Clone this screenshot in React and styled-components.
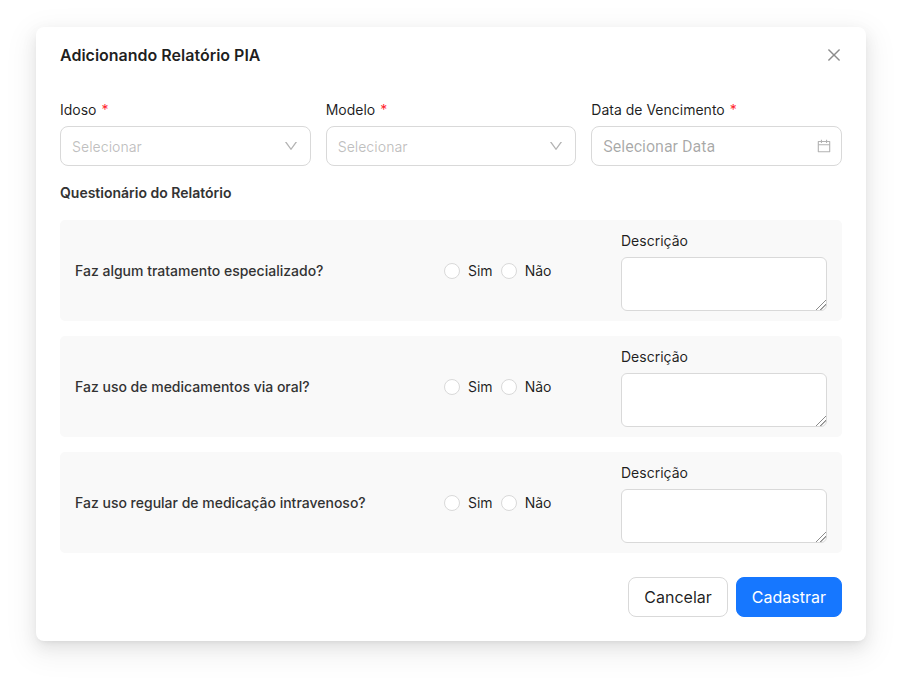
import React, { useId } from "react";
import styled, { createGlobalStyle } from "styled-components";
import { AiOutlineCalendar, AiOutlineClose, AiOutlineDown } from "react-icons/ai";

const GlobalStyle = createGlobalStyle`
  *, *::before, *::after { box-sizing: border-box; }
  body {
    margin: 0;
    background: #fff;
    color: rgba(0, 0, 0, 0.88);
    font-family: Inter, "Liberation Sans", sans-serif;
    font-size: 14px;
    line-height: 22px;
  }
  button, input, select, textarea { font-family: inherit; }
`;

const Page = styled.main`
  padding: 27px 36px 45px;
`;

const Dialog = styled.form`
  padding: 16px 24px 24px;
  background: #fff;
  border-radius: 8px;
  box-shadow:
    0 6px 16px 0 rgba(0, 0, 0, 0.08),
    0 3px 6px -4px rgba(0, 0, 0, 0.12),
    0 9px 28px 8px rgba(0, 0, 0, 0.05);
`;

const Header = styled.header`
  display: flex;
  align-items: center;
  justify-content: space-between;
  margin-bottom: 32px;
`;

const Title = styled.h1`
  margin: 0;
  font-size: 16px;
  font-weight: 600;
  line-height: 24px;
`;

const CloseButton = styled.button`
  display: flex;
  justify-content: center;
  width: 16px;
  padding: 0;
  border: 0;
  background: none;
  color: rgba(0, 0, 0, 0.45);
  font-size: 18px;
  cursor: pointer;

  svg { flex: none; }
`;

const Fields = styled.div`
  display: grid;
  grid-template-columns: repeat(3, minmax(0, 1fr));
  gap: 15px;
`;

const Field = styled.div`
  display: flex;
  flex-direction: column;
  gap: 5px;
`;

const Required = styled.span`
  margin-left: 1px;
  color: #ff1f2f;
`;

const ControlBox = styled.div`
  display: grid;
  grid-template-columns: minmax(0, 1fr) auto;
  align-items: center;
  height: 40px;
  padding-right: ${(p) => (p.$icon === "calendar" ? "9px" : "11px")};
  border: 1px solid #d9d9d9;
  border-radius: 8px;
  background: #fff;
  color: rgba(0, 0, 0, 0.3);

  svg {
    grid-area: 1 / 2;
    font-size: 16px;
    pointer-events: none;
  }
`;

const Select = styled.select`
  grid-area: 1 / 1 / 2 / 3;
  width: 100%;
  height: 38px;
  padding: 0 11px;
  border: 0;
  appearance: none;
  background: transparent;
  color: rgba(0, 0, 0, 0.25);
  font-size: 14px;
`;

const DateInput = styled.input`
  width: 100%;
  height: 38px;
  padding: 0 11px;
  border: 0;
  background: transparent;
  font-size: 16px;

  && { font-family: Roboto, sans-serif; }
  &::placeholder { color: rgba(0, 0, 0, 0.35); }
`;

const SectionTitle = styled.h2`
  margin: 16px 0;
  color: #333;
  font-size: 14px;
  font-weight: 600;
  line-height: 22px;
`;

const Questions = styled.div`
  display: flex;
  flex-direction: column;
  gap: 15px;
`;

const QuestionCard = styled.section`
  display: grid;
  grid-template-columns: 354fr 162fr 206fr;
  align-items: center;
  gap: 15px;
  padding: 10px 15px;
  border-radius: 5px;
  background: #f9f9f9;
`;

const QuestionText = styled.p`
  margin: 0;
  color: #333;
  font-weight: 500;
`;

const Options = styled.div`
  display: flex;
  gap: 8px;
`;

const Option = styled.label`
  display: flex;
  align-items: center;
  gap: 8px;
`;

const Radio = styled.input`
  width: 16px;
  height: 16px;
  margin: 0;
  border: 1px solid #d9d9d9;
  border-radius: 50%;
  appearance: none;
  background: #fff;

  &:checked { border: 5px solid #1677ff; }
`;

const Description = styled.textarea`
  display: block;
  width: 100%;
  height: 54px;
  padding: 4px 11px;
  border: 1px solid #d9d9d9;
  border-radius: 6px;
  background: #fff;
  font-size: 14px;
  line-height: 22px;
  resize: vertical;

  &::-webkit-resizer {
    background: linear-gradient(
      135deg,
      transparent 0 65%,
      #8c8c8c 66% 69%,
      transparent 70% 79%,
      #8c8c8c 80% 83%,
      transparent 84%
    );
  }
`;

const Footer = styled.footer`
  display: flex;
  justify-content: flex-end;
  gap: 8px;
  margin-top: 24px;
`;

const Button = styled.button`
  height: 40px;
  padding: 0 15px;
  border: 1px solid ${(p) => (p.$primary ? "#1677ff" : "#d9d9d9")};
  border-radius: 8px;
  background: ${(p) => (p.$primary ? "#1677ff" : "#fff")};
  color: ${(p) => (p.$primary ? "#fff" : "rgba(0, 0, 0, 0.88)")};
  font-size: 16px;
  line-height: 24px;
  cursor: pointer;
`;

const questions = [
  "Faz algum tratamento especializado?",
  "Faz uso de medicamentos via oral?",
  "Faz uso regular de medicação intravenoso?",
];

function RequiredLabel({ htmlFor, children }) {
  return (
    <label htmlFor={htmlFor}>
      {children} <Required>*</Required>
    </label>
  );
}

function SelectField({ label }) {
  const id = useId();
  return (
    <Field>
      <RequiredLabel htmlFor={id}>{label}</RequiredLabel>
      <ControlBox>
        <Select id={id} defaultValue="">
          <option value="">Selecionar</option>
        </Select>
        <AiOutlineDown aria-hidden="true" />
      </ControlBox>
    </Field>
  );
}

function DateField({ label }) {
  const id = useId();
  return (
    <Field>
      <RequiredLabel htmlFor={id}>{label}</RequiredLabel>
      <ControlBox $icon="calendar">
        <DateInput id={id} type="text" placeholder="Selecionar Data" />
        <AiOutlineCalendar aria-hidden="true" />
      </ControlBox>
    </Field>
  );
}

function Question({ text }) {
  const id = useId();
  return (
    <QuestionCard>
      <QuestionText id={`${id}-text`}>{text}</QuestionText>
      <Options role="radiogroup" aria-labelledby={`${id}-text`}>
        <Option>
          <Radio type="radio" name={id} value="sim" />
          Sim
        </Option>
        <Option>
          <Radio type="radio" name={id} value="nao" />
          Não
        </Option>
      </Options>
      <Field>
        <label htmlFor={`${id}-description`}>Descrição</label>
        <Description id={`${id}-description`} />
      </Field>
    </QuestionCard>
  );
}

export default function App() {
  return (
    <Page>
      <GlobalStyle />
      <Dialog role="dialog" aria-labelledby="dialog-title" onSubmit={(e) => e.preventDefault()}>
        <Header>
          <Title id="dialog-title">Adicionando Relatório PIA</Title>
          <CloseButton type="button" aria-label="Fechar">
            <AiOutlineClose aria-hidden="true" />
          </CloseButton>
        </Header>
        <Fields>
          <SelectField label="Idoso" />
          <SelectField label="Modelo" />
          <DateField label="Data de Vencimento" />
        </Fields>
        <SectionTitle>Questionário do Relatório</SectionTitle>
        <Questions>
          {questions.map((text) => (
            <Question key={text} text={text} />
          ))}
        </Questions>
        <Footer>
          <Button type="button">Cancelar</Button>
          <Button type="submit" $primary>Cadastrar</Button>
        </Footer>
      </Dialog>
    </Page>
  );
}
